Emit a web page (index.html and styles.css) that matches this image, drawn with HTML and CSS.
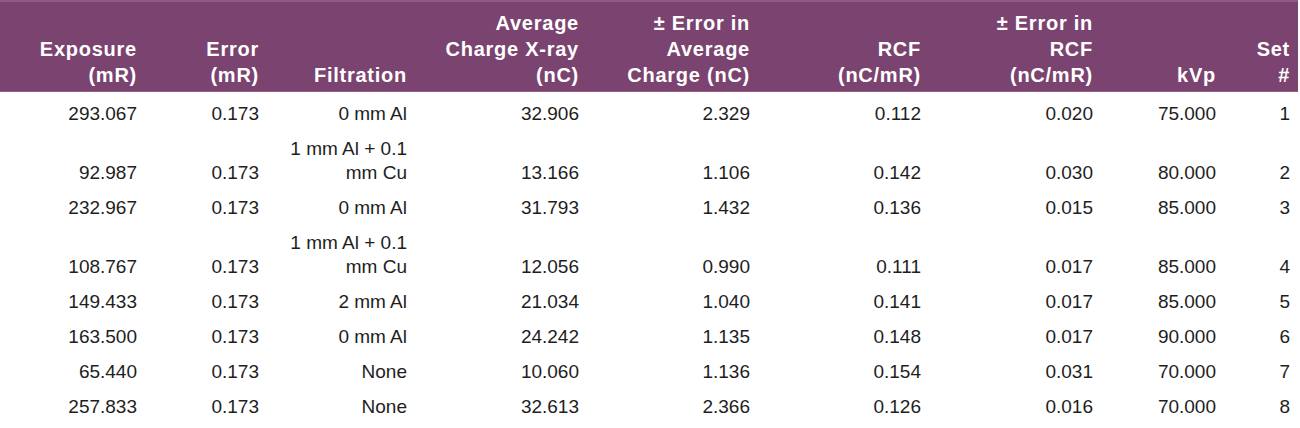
FILE: index.html
```html
<!DOCTYPE html>
<html>
<head>
<meta charset="utf-8">
<link rel="stylesheet" href="styles.css">
</head>
<body>
<table class="data">
  <colgroup>
    <col class="c1"><col class="c2"><col class="c3"><col class="c4"><col class="c5"><col class="c6"><col class="c7"><col class="c8"><col class="c9">
  </colgroup>
  <thead>
    <tr>
      <th>Exposure<br>(mR)</th>
      <th>Error<br>(mR)</th>
      <th>Filtration</th>
      <th>Average<br>Charge X-ray<br>(nC)</th>
      <th>± Error in<br>Average<br>Charge (nC)</th>
      <th>RCF<br>(nC/mR)</th>
      <th>± Error in<br>RCF<br>(nC/mR)</th>
      <th>kVp</th>
      <th>Set<br>#</th>
    </tr>
  </thead>
  <tbody>
    <tr><td>293.067</td><td>0.173</td><td>0 mm Al</td><td>32.906</td><td>2.329</td><td>0.112</td><td>0.020</td><td>75.000</td><td>1</td></tr>
    <tr><td>92.987</td><td>0.173</td><td>1 mm Al + 0.1<br>mm Cu</td><td>13.166</td><td>1.106</td><td>0.142</td><td>0.030</td><td>80.000</td><td>2</td></tr>
    <tr><td>232.967</td><td>0.173</td><td>0 mm Al</td><td>31.793</td><td>1.432</td><td>0.136</td><td>0.015</td><td>85.000</td><td>3</td></tr>
    <tr><td>108.767</td><td>0.173</td><td>1 mm Al + 0.1<br>mm Cu</td><td>12.056</td><td>0.990</td><td>0.111</td><td>0.017</td><td>85.000</td><td>4</td></tr>
    <tr><td>149.433</td><td>0.173</td><td>2 mm Al</td><td>21.034</td><td>1.040</td><td>0.141</td><td>0.017</td><td>85.000</td><td>5</td></tr>
    <tr><td>163.500</td><td>0.173</td><td>0 mm Al</td><td>24.242</td><td>1.135</td><td>0.148</td><td>0.017</td><td>90.000</td><td>6</td></tr>
    <tr><td>65.440</td><td>0.173</td><td>None</td><td>10.060</td><td>1.136</td><td>0.154</td><td>0.031</td><td>70.000</td><td>7</td></tr>
    <tr><td>257.833</td><td>0.173</td><td>None</td><td>32.613</td><td>2.366</td><td>0.126</td><td>0.016</td><td>70.000</td><td>8</td></tr>
  </tbody>
</table>
</body>
</html>
```
FILE: styles.css
```css
html, body {
  margin: 0;
  padding: 0;
  background: #ffffff;
}

.data {
  border-collapse: collapse;
  table-layout: fixed;
  width: 1298px;
  font-family: "Liberation Sans", Arial, Helvetica, sans-serif;
  color: #1e1e1e;
}

.c1 { width: 145px; }
.c2 { width: 122px; }
.c3 { width: 148px; }
.c4 { width: 172px; }
.c5 { width: 171px; }
.c6 { width: 171px; }
.c7 { width: 172px; }
.c8 { width: 123px; }
.c9 { width: 74px; }

.data thead tr {
  background: #7b436f;
  border-top: 2px solid #8e5a83;
  border-bottom: 1px solid #935f88;
}

.data th {
  color: #ffffff;
  font-weight: bold;
  font-size: 20px;
  line-height: 26px;
  letter-spacing: 0.75px;
  text-align: right;
  vertical-align: bottom;
  padding: 8px 8px 3px 0;
  white-space: nowrap;
}

.data td {
  font-size: 19px;
  line-height: 24px;
  text-align: right;
  vertical-align: bottom;
  padding: 6px 8px 5px 0;
  white-space: nowrap;
}

.data tbody tr:first-child td {
  padding-top: 10px;
}
```
